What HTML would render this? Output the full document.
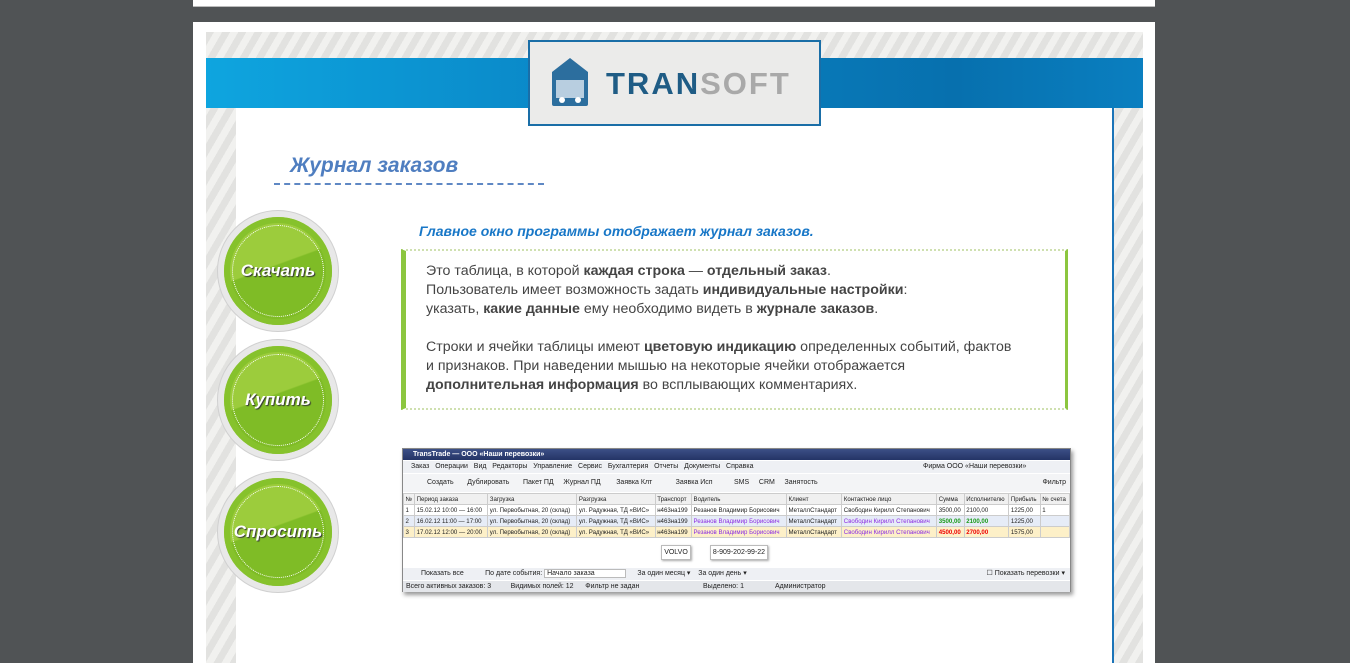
<!DOCTYPE html>
<html><head><meta charset="utf-8"><style>
*{margin:0;padding:0;box-sizing:border-box}
html{overflow:hidden;height:663px}
body{width:1350px;height:663px;background:#505355;position:relative;overflow:hidden;font-family:"Liberation Sans",sans-serif}
.top{position:absolute;left:193px;top:0;width:962px;height:7px;background:#fff;border-bottom:1px solid #bbb}
.page{position:absolute;left:193px;top:22px;width:962px;height:641px;background:#fff}
.stripes{position:absolute;left:206px;top:32px;width:937px;height:631px;background:repeating-linear-gradient(-60deg,#e2e2e0 0 7px,#f1f1ef 7px 14px)}
.band{position:absolute;left:206px;top:58px;width:937px;height:50px;background:linear-gradient(90deg,#0ea5df,#0a86c6 40%,#0770ae 80%,#0a7fc0)}
.content{position:absolute;left:236px;top:108px;width:878px;height:555px;background:#fff;border-right:2px solid #1b74b8}
.logo{position:absolute;left:528px;top:40px;width:293px;height:86px;background:#ebebea;border:2px solid #1a6ea7}
.logo .t{position:absolute;left:76px;top:24px;font:bold 31px "Liberation Sans",sans-serif;letter-spacing:2px;color:#1f5c85}
.logo .t span{color:#a9a9a9}
.h1{position:absolute;left:290px;top:154px;font:italic bold 21px "Liberation Sans",sans-serif;color:#4f7ec0}
.dash{position:absolute;left:274px;top:183px;width:270px;border-top:2px dashed #5f88c4}
.sub{position:absolute;left:419px;top:223px;font:italic bold 14px "Liberation Sans",sans-serif;color:#1877c7}
.box{position:absolute;left:401px;top:249px;width:667px;height:161px;border:2px dotted #cfe0b0;border-left:5px solid #8cc63f;border-right:3px solid #8cc63f}
.box p{position:absolute;left:20px;font-size:14.2px;line-height:19px;color:#444;white-space:nowrap}
.circ{position:absolute;width:122px;height:122px;border-radius:50%;background:#e8e8e8;border:1px solid #d0d0d0}
.circ .g{position:absolute;left:6px;top:6px;width:108px;height:108px;border-radius:50%;background:linear-gradient(160deg,#9ccc3c 45%,#7fbc26 46%);box-shadow:inset 0 0 0 6px #86c22c}
.circ .d{position:absolute;left:8px;top:8px;right:8px;bottom:8px;border-radius:50%;border:1.5px dotted #fff}
.circ span{position:absolute;left:0;right:0;top:50px;text-align:center;font:italic bold 17px "Liberation Sans",sans-serif;color:#fff;text-shadow:1px 1px 1px #333}
.win{position:absolute;left:402px;top:448px;width:669px;height:144px;background:#fff;border:1px solid #888;box-shadow:2px 3px 4px #999;font-size:7px;color:#222}
.win .tb{height:11px;background:linear-gradient(#3c4f86,#243466);color:#fff;font-weight:bold;padding-left:10px;line-height:11px}
.row{position:absolute;left:0;right:0;white-space:nowrap;overflow:hidden}
table{border-collapse:collapse;width:100%;font-size:6.1px}
td{border:1px solid #ccc;padding:0 1.5px;height:11px;white-space:nowrap}
</style></head><body>
<div class="top"></div>
<div class="page"></div>
<div class="stripes"></div>
<div class="band"></div>
<div class="content"></div>
<div class="logo">
<svg style="position:absolute;left:20px;top:14px" width="40" height="52"><path d="M2 16 L20 2 L38 16 V48 Q38 50 36 50 H4 Q2 50 2 48Z" fill="#2c6e9e"/><rect x="6" y="24" width="28" height="18" fill="#b8cee0"/><circle cx="12" cy="44" r="3" fill="#fff"/><circle cx="28" cy="44" r="3" fill="#fff"/></svg>
<div class="t">TRAN<span>SOFT</span></div></div>
<div class="h1">Журнал заказов</div>
<div class="dash"></div>
<div class="sub">Главное окно программы отображает журнал заказов.</div>
<div class="box">
<p style="top:11px">Это таблица, в которой <b>каждая строка</b> — <b>отдельный заказ</b>.<br>Пользователь имеет возможность задать <b>индивидуальные настройки</b>:<br>указать, <b>какие данные</b> ему необходимо видеть в <b>журнале заказов</b>.</p>
<p style="top:87px">Строки и ячейки таблицы имеют <b>цветовую индикацию</b> определенных событий, фактов<br>и признаков. При наведении мышью на некоторые ячейки отображается<br><b>дополнительная информация</b> во всплывающих комментариях.</p>
</div>
<div class="circ" style="left:217px;top:210px"><div class="g"><div class="d"></div></div><span>Скачать</span></div>
<div class="circ" style="left:217px;top:339px"><div class="g"><div class="d"></div></div><span>Купить</span></div>
<div class="circ" style="left:217px;top:471px"><div class="g"><div class="d"></div></div><span>Спросить</span></div>
<div class="win">
<div class="tb">TransTrade — ООО «Наши перевозки»</div>
<div class="row" style="top:12px;height:12px;background:#eef0f4;line-height:12px;padding-left:8px">Заказ &nbsp; Операции &nbsp; Вид &nbsp; Редакторы &nbsp; Управление &nbsp; Сервис &nbsp; Бухгалтерия &nbsp; Отчеты &nbsp; Документы &nbsp; Справка<span style="position:absolute;left:520px">Фирма ООО «Наши перевозки»</span></div>
<div class="row" style="top:25px;height:18px;background:#f3f4f6;line-height:18px;padding-left:24px">Создать &nbsp;&nbsp;&nbsp;&nbsp;&nbsp; Дублировать &nbsp;&nbsp;&nbsp;&nbsp;&nbsp; Пакет ПД &nbsp;&nbsp;&nbsp; Журнал ПД &nbsp;&nbsp;&nbsp;&nbsp;&nbsp;&nbsp; Заявка Клт &nbsp;&nbsp;&nbsp;&nbsp;&nbsp;&nbsp;&nbsp;&nbsp;&nbsp;&nbsp; Заявка Исп &nbsp;&nbsp;&nbsp;&nbsp;&nbsp;&nbsp;&nbsp;&nbsp;&nbsp; SMS &nbsp;&nbsp;&nbsp; CRM &nbsp;&nbsp;&nbsp; Занятость<span style="position:absolute;right:4px">Фильтр</span></div>
<div class="row" style="top:44px"><table>
<tr style="background:#f0f0f0"><td>№</td><td>Период заказа</td><td>Загрузка</td><td>Разгрузка</td><td>Транспорт</td><td>Водитель</td><td>Клиент</td><td>Контактное лицо</td><td>Сумма</td><td>Исполнителю</td><td>Прибыль</td><td>№ счета</td></tr>
<tr><td>1</td><td>15.02.12 10:00 — 16:00</td><td>ул. Первобытная, 20 (склад)</td><td>ул. Радужная, ТД «ВИС»</td><td>н463на199</td><td>Резанов Владимир Борисович</td><td>МеталлСтандарт</td><td>Свободин Кирилл Степанович</td><td>3500,00</td><td>2100,00</td><td>1225,00</td><td>1</td></tr>
<tr style="background:#e6ecf7"><td>2</td><td>16.02.12 11:00 — 17:00</td><td>ул. Первобытная, 20 (склад)</td><td>ул. Радужная, ТД «ВИС»</td><td>н463на199</td><td style="color:#8a2be2">Резанов Владимир Борисович</td><td>МеталлСтандарт</td><td style="color:#8a2be2">Свободин Кирилл Степанович</td><td style="color:#1a9a1a;font-weight:bold">3500,00</td><td style="color:#1a9a1a;font-weight:bold">2100,00</td><td>1225,00</td><td></td></tr>
<tr style="background:#fdf0c8"><td>3</td><td>17.02.12 12:00 — 20:00</td><td>ул. Первобытная, 20 (склад)</td><td>ул. Радужная, ТД «ВИС»</td><td>н463на199</td><td style="color:#8a2be2">Резанов Владимир Борисович</td><td>МеталлСтандарт</td><td style="color:#8a2be2">Свободин Кирилл Степанович</td><td style="color:#e00;font-weight:bold">4500,00</td><td style="color:#e00;font-weight:bold">2700,00</td><td>1575,00</td><td></td></tr></table></div>
<div style="position:absolute;left:258px;top:96px;width:30px;height:15px;border:1px solid #bbb;box-shadow:1px 1px 2px #aaa;text-align:center;line-height:13px">VOLVO</div>
<div style="position:absolute;left:307px;top:96px;width:58px;height:15px;border:1px solid #bbb;box-shadow:1px 1px 2px #aaa;text-align:center;line-height:13px">8-909-202-99-22</div>
<div class="row" style="top:119px;height:12px;background:#eef0f4;line-height:12px;padding-left:18px">Показать все &nbsp;&nbsp;&nbsp;&nbsp;&nbsp;&nbsp;&nbsp;&nbsp;&nbsp; По дате события: <span style="background:#fff;border:1px solid #bbb;padding:0 30px 0 2px">Начало заказа</span> &nbsp;&nbsp;&nbsp;&nbsp; За один месяц ▾ &nbsp;&nbsp; За один день ▾<span style="position:absolute;right:5px">☐ Показать перевозки ▾</span></div>
<div class="row" style="top:132px;height:11px;background:#e4e6ea;line-height:11px;padding-left:3px">Всего активных заказов: 3 &nbsp;&nbsp;&nbsp;&nbsp;&nbsp;&nbsp;&nbsp;&nbsp; Видимых полей: 12 &nbsp;&nbsp;&nbsp;&nbsp; Фильтр не задан<span style="position:absolute;left:300px">Выделено: 1</span><span style="position:absolute;left:372px">Администратор</span></div>
</div>
</body></html>
